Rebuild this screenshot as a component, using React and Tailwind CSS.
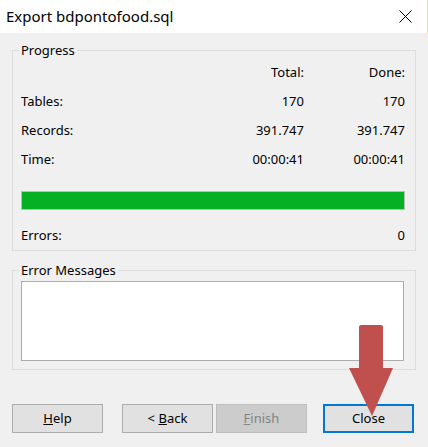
function Row({ label, total, done }) {
  return (
    <div className="grid h-[29px] grid-cols-[1fr_100px_101px] items-center">
      <span>{label}</span>
      <span className="text-right">{total}</span>
      <span className="text-right">{done}</span>
    </div>
  );
}

function Button({ children, disabled, primary, className = '' }) {
  let look = 'border border-[#adadad] bg-[#e1e1e1] text-black';
  if (disabled) look = 'border border-[#bfbfbf] bg-[#cccccc] text-[#838383]';
  if (primary) look = 'border-2 border-[#0078d7] bg-[#e1e1e1] text-black';
  return (
    <button className={`flex h-[29px] w-[91px] items-center justify-center ${look} ${className}`}>
      {children}
    </button>
  );
}

export default function App() {
  return (
    <div
      className="relative flex h-[447px] w-[428px] flex-col bg-[#f0f0f0] text-[13px] text-black"
      style={{ fontFamily: '"Noto Sans", "Open Sans", sans-serif' }}
    >
      <div className="flex h-[33px] shrink-0 items-center justify-between border-r border-[#efe39b] bg-white pl-[6px] pr-[15px]">
        <span className="text-[15px]">Export bdpontofood.sql</span>
        <svg width="13" height="13" viewBox="0 0 13 13">
          <path d="M0.5 0.5 L12.5 12.5 M12.5 0.5 L0.5 12.5" stroke="#000" strokeWidth="1" fill="none" />
        </svg>
      </div>

      <div className="flex flex-col px-[12px]">
        <fieldset className="mt-[9px] w-[404px] border border-[#dcdcdc] pl-[8px] pr-[10px]">
          <legend className="ml-[-2px] h-[16px] px-[2px] leading-[16px]">Progress</legend>
          <div className="grid h-[29px] grid-cols-[1fr_100px_101px] items-center">
            <span />
            <span className="text-right">Total:</span>
            <span className="text-right">Done:</span>
          </div>
          <Row label="Tables:" total="170" done="170" />
          <Row label="Records:" total="391.747" done="391.747" />
          <Row label="Time:" total="00:00:41" done="00:00:41" />
          <div className="mt-[17px] h-[19px] border border-[#bcbcbc] bg-[#06b025]" />
          <div className="mt-[12px] flex h-[28px] items-center justify-between">
            <span>Errors:</span>
            <span>0</span>
          </div>
        </fieldset>

        <fieldset className="mt-[11px] w-[404px] border border-[#dcdcdc] pb-[8px] pl-[8px] pr-[11px]">
          <legend className="ml-[-2px] h-[16px] px-[2px] leading-[16px]">Error Messages</legend>
          <div className="mt-[3px] h-[80px] border border-[#adadad] bg-white" />
        </fieldset>

        <div className="mt-[34px] flex">
          <Button>
            <span><u>H</u>elp</span>
          </Button>
          <Button className="ml-[19px]">
            <span>&lt; <u>B</u>ack</span>
          </Button>
          <Button disabled className="ml-[3px]">
            <span><u>F</u>inish</span>
          </Button>
          <Button primary className="ml-[16px]">
            <span>Close</span>
          </Button>
        </div>
      </div>

      <svg
        className="absolute left-[349px] top-[325px]"
        width="44"
        height="91"
        viewBox="0 0 44 91"
      >
        <path d="M12 0 H32 Q34 0 34 2 V44 H10 V2 Q10 0 12 0 Z" fill="#c0504d" />
        <polygon points="0,43 44,43 23,91" fill="#c0504d" />
      </svg>
    </div>
  );
}
